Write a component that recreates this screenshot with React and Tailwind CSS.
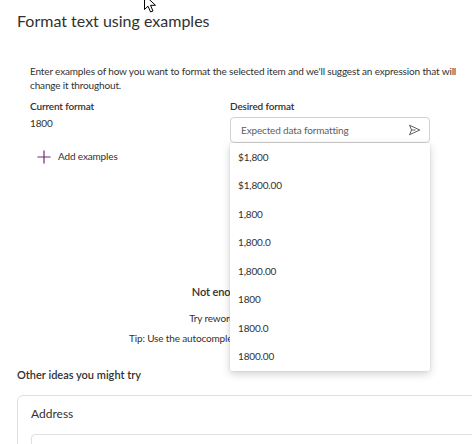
import React from "react";

const options = ["$1,800", "$1,800.00", "1,800", "1,800.0", "1,800.00", "1800", "1800.0", "1800.00"];

function SendIcon() {
  return (
    <svg width="13" height="12" viewBox="0 0 13 12" fill="none">
      <path d="M1.5 1.2 L11.8 6 L1.5 10.8 L3.6 6 Z M3.6 6 H7.5" stroke="#605e5c" strokeWidth="1" strokeLinejoin="round" />
    </svg>
  );
}

function PlusIcon() {
  return (
    <svg width="14" height="14" viewBox="0 0 14 14">
      <path d="M7 0.5 V13.5 M0.5 7 H13.5" stroke="#742774" strokeWidth="1.2" />
    </svg>
  );
}

function Cursor() {
  return (
    <svg width="16" height="20" viewBox="0 0 16 20" className="absolute left-[143px] top-[-6px]">
      <path d="M1.5 1 V15.5 L5 12.2 L7.6 18 L10 17 L7.5 11.3 H12.5 Z" fill="#fff" stroke="#000" strokeWidth="1" strokeLinejoin="round" />
    </svg>
  );
}

export default function App() {
  return (
    <div className="relative w-[472px] h-[444px] overflow-hidden bg-white text-[#323130]" style={{ fontFamily: '"Segoe UI", Lato, sans-serif' }}>
      <div className="w-[500px] px-[17px] pt-[9px]">
        <h1 className="text-[16px] leading-[24px] font-normal">Format text using examples</h1>

        <div className="pl-[13px] pt-[32px] text-[10px] tracking-[-0.15px]">
          <p className="leading-[13.5px] w-[440px]">
            Enter examples of how you want to format the selected item and we'll suggest an expression that will change it throughout.
          </p>

          <div className="flex pt-[6px]">
            <div className="w-[200px]">
              <div className="font-semibold leading-[16px]">Current format</div>
              <div className="leading-[16px] pt-[1px]">1800</div>
            </div>
            <div className="w-[200px]">
              <div className="font-semibold leading-[16px]">Desired format</div>
              <div className="relative mt-[3px]">
                <div className="flex items-center justify-between h-[26px] border border-[#d1d1d1] rounded-[4px] pl-[10px] pr-[8px]">
                  <span className="text-[#605e5c]">Expected data formatting</span>
                  <SendIcon />
                </div>
                <div className="absolute left-0 top-[26px] w-[200px] z-10 bg-white shadow-[0_3px_8px_rgba(0,0,0,0.18),0_0_2px_rgba(0,0,0,0.12)] rounded-[2px]">
                  {options.map((o) => (
                    <div key={o} className="h-[28.5px] flex items-center px-[8px]">{o}</div>
                  ))}
                </div>
              </div>
            </div>
          </div>

          <div className="flex items-center gap-[7px] pl-[7px] pt-[6px]">
            <PlusIcon />
            <span>Add examples</span>
          </div>
        </div>

        <div className="flex flex-col items-center pt-[120px] tracking-[-0.15px]">
          <div className="text-[11px] font-semibold leading-[16px] pl-[4px]">Not enough examples yet</div>
          <div className="text-[10px] leading-[14px] pt-[11px]">Try rewording your examples</div>
          <div className="text-[10px] leading-[14px] pt-[6px]">Tip: Use the autocomplete options to add more examples</div>
        </div>

        <div className="text-[11px] font-semibold leading-[16px] pt-[22px]">Other ideas you might try</div>

        <div className="mt-[12px] border border-[#e1dfdd] rounded-[6px] px-[13px] pt-[10px] h-[80px] w-[480px]">
          <div className="text-[12px] leading-[16px]">Address</div>
          <div className="mt-[12px] h-[40px] border border-[#e1dfdd] rounded-[4px]"></div>
        </div>
      </div>
      <Cursor />
    </div>
  );
}
